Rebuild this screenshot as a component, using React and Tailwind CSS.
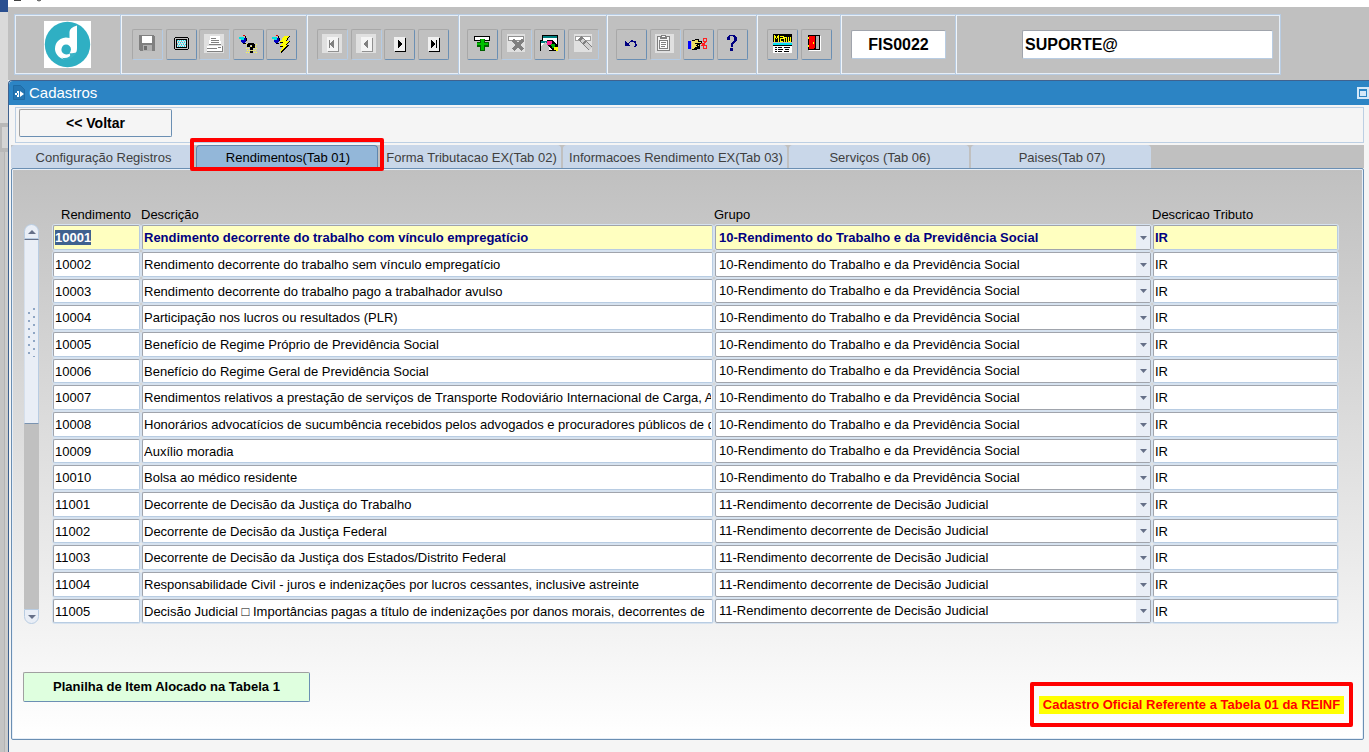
import React, { useEffect, useRef } from "react";

const rows = [
  ["10001", "Rendimento decorrente do trabalho com vínculo empregatício", 10],
  ["10002", "Rendimento decorrente do trabalho sem vínculo empregatício", 10],
  ["10003", "Rendimento decorrente do trabalho pago a trabalhador avulso", 10],
  ["10004", "Participação nos lucros ou resultados (PLR)", 10],
  ["10005", "Benefício de Regime Próprio de Previdência Social", 10],
  ["10006", "Benefício do Regime Geral de Previdência Social", 10],
  ["10007", "Rendimentos relativos a prestação de serviços de Transporte Rodoviário Internacional de Carga, Auferidos", 10],
  ["10008", "Honorários advocatícios de sucumbência recebidos pelos advogados e procuradores públicos de que", 10],
  ["10009", "Auxílio moradia", 10],
  ["10010", "Bolsa ao médico residente", 10],
  ["11001", "Decorrente de Decisão da Justiça do Trabalho", 11],
  ["11002", "Decorrente de Decisão da Justiça Federal", 11],
  ["11003", "Decorrente de Decisão da Justiça dos Estados/Distrito Federal", 11],
  ["11004", "Responsabilidade Civil - juros e indenizações por lucros cessantes, inclusive astreinte", 11],
  ["11005", "Decisão Judicial □ Importâncias pagas a título de indenizações por danos morais, decorrentes de", 11],
];

const groups = {
  10: "10-Rendimento do Trabalho e da Previdência Social",
  11: "11-Rendimento decorrente de Decisão Judicial",
};

const NavBox = ({ d, off }) => (
  <>
    {off && <path fill="#e0e0e0" d="M5 5h20v19H5z" />}
    <path fill={off ? "#909090" : "#000"} d="M11 9h11v14H11z" />
    <path fill={off ? "#f4f4f4" : "#f0f0f0"} d="M10 8h11v14H10z" />
    <path fill={off ? "#808080" : "#000"} d={d} />
  </>
);

const Flash = () => (
  <>
    <path fill="#00e0e0" d="M6 8h5v1h1v2h-4v-1H6z" />
    <path fill="#0000c0" d="M8 11h3V9h2v4h-1v1H9v-1H8z" />
    <path fill="#000" d="M12 7h1v2h1v3h-1V9h-1zM10 14h3v1h-3z" />
    <path fill="#e00000" d="M10 6h2v1h-2z" />
  </>
);

const icons = {
  save: (
    <>
      <path fill="#808080" d="M7 6h15v1h1v15H8v-1H7z" />
      <path fill="#fff" d="M10 7h10v7H10z" />
      <path fill="#b0b0b0" d="M11 16h9v6h-9z" />
      <path fill="#707070" d="M12 17h3v4h-3z" />
    </>
  ),
  screen: (
    <>
      <path fill="#000" d="M9 8h13v1h1v11h-1v1H9v-1H8V9h1z" />
      <path fill="#c0c0c0" d="M9 9h13v11H9z" />
      <path fill="#000" d="M10 10h11v9H10z" />
      <path fill="#b8f4f4" d="M11 11h9v7h-9z" />
      <path stroke="#f090a0" strokeDasharray="1 2" d="M12 12.500h8M11 14.500h9M12 16.500h8" />
      <path stroke="#20d0e0" strokeDasharray="1 1" d="M11 11.500h9M12 13.500h8M11 15.500h9M12 17.500h8" />
    </>
  ),
  print: (
    <>
      <path fill="#e0e0e0" d="M5 5h20v19H5z" />
      <path fill="#fff" d="M11 7h10l1 9H10z" />
      <path fill="#808080" d="M12 9h5v1h-5zM12 11h8v1h-8zM12 13h8v1h-8zM10 15h12v1H10z" />
      <path fill="#fff" d="M8 17h15v5H8z" />
      <path fill="#808080" d="M8 19h10v1H8zM19 18h3v1h-3zM8 22h16v1H8zM23 17h1v5h-1z" />
    </>
  ),
  ask: (
    <>
      <Flash />
      <path stroke="#ffff40" strokeDasharray="1 1" d="M13 15.500h11M14 17.500h10M13 19.500h11M14 21.500h10M13 23.500h11" />
      <path fill="#000" d="M15 14h6v1h1v4h-2v2h-3v-3h2v-2h-2v2h-3v-3h1zM17 22h3v2h-3z" />
    </>
  ),
  bolt: (
    <>
      <Flash />
      <path fill="#000" d="M18 7h6l-3 5h3l-3 4h2l-8 8 2-6h-3l3-4h-3z" />
      <path fill="#ffff00" d="M18 7h5l-3 5h3l-3 4h1l-7 7 3-6h-3l3-4h-3z" />
    </>
  ),
  first: <NavBox off d="M12 11h1v8h-1zM17 11v8h-1v-1h-1v-1h-1v-1h-1v-2h1v-1h1v-1h1v-1z" />,
  prev: <NavBox off d="M17 11v8h-1v-1h-1v-1h-1v-1h-1v-2h1v-1h1v-1h1v-1z" />,
  next: <NavBox d="M14 11v8h1v-1h1v-1h1v-1h1v-2h-1v-1h-1v-1h-1v-1z" />,
  last: <NavBox d="M13 11v8h1v-1h1v-1h1v-1h1v-2h-1v-1h-1v-1h-1v-1zM18 11h1v8h-1z" />,
  add: (
    <>
      <path fill="#000" d="M7 7h16v5H7z" />
      <path fill="#fff" d="M8 8h14v3H8z" />
      <path fill="#006000" d="M13 10h5v3h4v5h-4v4h-5v-4h-3v-5h3z" />
      <path fill="#00c000" d="M14 10h3v4h4v2h-4v5h-3v-5h-4v-2h4z" />
    </>
  ),
  remove: (
    <>
      <path fill="#e0e0e0" d="M6 5h18v18H6z" />
      <path fill="#909090" d="M7 7h16v5H7z" />
      <path fill="#fff" d="M8 8h14v3H8z" />
      <path stroke="#808080" strokeWidth="3" d="M12 11l10 10M22 11L12 21" />
    </>
  ),
  search: (
    <>
      <path fill="#000" d="M8 6h16v12H8zM6 11h16v11H6z" />
      <path fill="#fff" d="M9 9h14v8H9zM7 14h13v7H7z" />
      <path fill="#008080" d="M9 7h14v2H9zM7 12h13v2H7z" />
      <path fill="#c0c0c0" d="M7 17l4-4 4 4v5H7z" />
      <path fill="#000" d="M13 11h5l6 6v5h-5l-6-6z" />
      <path fill="#ff2090" d="M13 12h5v4h-5z" />
      <path fill="#00b000" d="M17 15h4v4h-3v-2h-1z" />
      <path fill="#ffff00" d="M20 18h4v4h-2v-1h-2z" />
    </>
  ),
  erase: (
    <>
      <path fill="#e0e0e0" d="M6 5h18v18H6z" />
      <path fill="#a0a0a0" d="M7 7h16v5H7z" />
      <path fill="#fff" d="M8 8h14v3H8z" />
      <path stroke="#808080" strokeWidth="5" d="M12 9l11 11" />
      <path stroke="#d0d0d0" strokeWidth="3" d="M14 11l9 9" />
      <path stroke="#808080" strokeWidth="2" d="M15 15l3-3" />
    </>
  ),
  undo: (
    <>
      <path fill="none" stroke="#000080" strokeWidth="1.4" d="M11 16l3-3q2-2 5 0 2 3 0 5" />
      <path fill="#000080" d="M9 12h1v1h1v1h1v1h1v1h1v1H9z" />
    </>
  ),
  paste: (
    <>
      <path fill="#e0e0e0" d="M5 5h19v19H5z" />
      <path fill="#808080" d="M7 7h13v15H7z" />
      <path fill="#f4f4f4" d="M8 8h11v13H8z" />
      <path fill="#808080" d="M11 6h5v1h1v3h-7V7h1zM9 11h9v9H9z" />
      <path fill="#fff" d="M12 7h3v1h-3zM10 12h7v7h-7z" />
      <path fill="#808080" d="M11 13h5v1h-5zM11 15h5v1h-5zM11 17h4v1h-4z" />
    </>
  ),
  hand: (
    <>
      <path fill="#0000ff" d="M5 12h3v8H5z" />
      <path fill="#000" d="M9 11h3v-1h4v2h3v3h-2v5h-3v1H9z" />
      <path fill="#f0e060" d="M9 12h3v-1h3v2h3v1h-4v2h2v1h-2v2h-3v1H9z" />
      <path fill="#000" d="M12 14h2v1h-2zM13 16h2v1h-2zM12 18h2v1h-2z" />
      <path fill="none" stroke="#ff2020" d="M17.500 14h2l3 3M17.500 16h2l3-3M20 9.500h3v3h-3zM20 16.500h3v3h-3z" />
    </>
  ),
  help: (
    <path fill="#000080" d="M12 6h6v1h1v1h1v4h-1v1h-1v1h-1v1h-1v3h-2v-4h1v-1h1v-1h1V8h-1V7h-3v4h-3V8h1V7h1zM13 19h3v3h-3z" />
  ),
  menu: (
    <>
      <path fill="#000" d="M6 5h19v8H6z" />
      <path fill="none" stroke="#ffff00" d="M7.500 13V6.500M7.500 6.500l2 3 2-3M11.500 6V13M13 9.500h3M13.500 9v3.500H16M13 7.500h3V10M17.500 13V8.500h2V13M21.500 8v4.500h2V8" />
      <path fill="#00e0f0" d="M6 14h19v3H6z" />
      <path fill="#fff" d="M6 17h19v7H6z" />
      <path fill="#000" d="M6 16h19v1H6zM8 18h2v1H8zM11 18h4v1h-4zM17 18h6v1h-6zM8 20h2v1H8zM11 20h5v1h-5zM18 20h4v1h-4zM8 22h2v1H8zM11 22h4v1h-4zM17 22h5v1h-5z" />
    </>
  ),
  exit: (
    <>
      <path fill="#fff" d="M8 7h12v15H8z" />
      <path fill="#000" d="M7 6h12v15H7z" />
      <path fill="#b0b0b0" d="M15 7h3v13h-3z" />
      <path fill="#ff0000" d="M8 7h6v12h-1v1H8z" />
      <path fill="#ffff00" d="M7 8h1v2H7zM7 16h1v2H7zM12 13h1v2h-1z" />
    </>
  ),
};

const ToolGroup = ({ items, className }) => (
  <div className={`flex items-center justify-between ${className}`}>
    {items.map(([name, label, disabled]) => (
      <button
        key={name}
        aria-label={label}
        disabled={disabled}
        className={`size-[31px] rounded-xs border border-t-[#a8a8a8] border-l-[#a8a8a8] ${
          disabled ? "border-r-[#b4cbe4] border-b-[#b4cbe4]" : "border-r-[#6b8fb3] border-b-[#6b8fb3]"
        }`}
      >
        <svg viewBox="1 1 29 29" className="block size-[29px]" shapeRendering="crispEdges" aria-hidden="true">
          {icons[name]}
        </svg>
      </button>
    ))}
  </div>
);

const Divider = () => <div className="w-[2px] self-stretch border-l border-[#b8cce2] bg-[#f0f5fa]" />;

const Toolbar = () => (
  <header className="flex bg-[#c0c0c0] px-[6px] pt-[7px] pb-[5px]">
    <div className="flex h-[61px] w-[1267px] items-center border border-[#b8cce2] ring-1 ring-[#e6eef7] ring-inset">
      <div className="flex w-[105px] justify-center">
        <svg viewBox="0 0 47 47" className="size-[47px] bg-white" role="img" aria-label="Logo">
          <circle cx="23.500" cy="23.500" r="22.700" fill="#2fafc3" />
          <path fill="#fff" d="M33 4.500v22.500a11 11 0 1 1-7.500-10V11q0-4.500 7.500-6.500z" />
          <path fill="#2fafc3" d="M22 23.500a5 5 0 0 1 5 5q-.3 2.500-2 4.500-3 1-5.500-.5a5 5 0 0 1 2.500-9z" />
          <path fill="#2fafc3" d="M25 32q2 2 .5 3.500-4 2.500-8 1 3 4 9 2.500 6-2 8-9-4 3-9.500 2z" opacity="0.950" />
        </svg>
      </div>
      <Divider />
      <ToolGroup
        className="mr-[9px] ml-[10px] w-[165px]"
        items={[["save", "Salvar", true], ["screen", "Tela"], ["print", "Imprimir", true], ["ask", "Entrar consulta"], ["bolt", "Executar consulta"]]}
      />
      <Divider />
      <ToolGroup
        className="mx-[9px] w-[132px]"
        items={[["first", "Primeiro", true], ["prev", "Anterior", true], ["next", "Próximo"], ["last", "Último"]]}
      />
      <Divider />
      <ToolGroup
        className="mx-[7px] w-[132px]"
        items={[["add", "Inserir"], ["remove", "Remover", true], ["search", "Pesquisar"], ["erase", "Limpar", true]]}
      />
      <Divider />
      <ToolGroup
        className="mx-[8px] w-[132px]"
        items={[["undo", "Desfazer"], ["paste", "Colar", true], ["hand", "Recortar"], ["help", "Ajuda"]]}
      />
      <Divider />
      <ToolGroup className="mr-[8px] ml-[9px] w-[65px]" items={[["menu", "Menu"], ["exit", "Sair"]]} />
      <Divider />
      <input
        aria-label="Programa"
        defaultValue="FIS0022"
        className="mx-[9px] h-[29px] w-[95px] rounded-xs border border-t-[#a0a4ac] border-r-[#b8cce2] border-b-[#b8cce2] border-l-[#a0a4ac] bg-white text-center text-[16px] font-bold outline-none"
      />
      <Divider />
      <input
        aria-label="Usuário"
        defaultValue="SUPORTE@"
        className="ml-auto mr-[7px] h-[29px] w-[251px] rounded-xs border border-t-[#a0a4ac] border-r-[#b8cce2] border-b-[#b8cce2] border-l-[#a0a4ac] bg-white pl-[2px] text-[16px] font-bold outline-none"
      />
    </div>
  </header>
);

const tabs = [
  ["Configuração Registros", "w-[183px]"],
  ["Rendimentos(Tab 01)", "w-[182px]"],
  ["Forma Tributacao EX(Tab 02)", "w-[181px]"],
  ["Informacoes Rendimento EX(Tab 03)", "w-[224px]"],
  ["Serviços (Tab 06)", "w-[180px]"],
  ["Paises(Tab 07)", "w-[180px]"],
];

const Tabs = () => (
  <div role="tablist" className="flex h-[23px] gap-[2px] bg-[#c0c0c0]">
    {tabs.map(([label, width], i) => (
      <div key={label} className={`relative ${width}`}>
        <button
          role="tab"
          aria-selected={i === 1}
          className={`h-full w-full rounded-t-sm border border-b-0 pt-[2px] pl-[2px] text-[13px] leading-5 whitespace-nowrap ${
            i === 1 ? "border-[#5f86ad] bg-[#93b7d9] text-black" : "border-[#c9d7e9] bg-[#c9d7e9] text-[#404040]"
          }`}
        >
          {label}
        </button>
        {i === 1 && <div className="pointer-events-none absolute -inset-x-[6px] -top-[7px] -bottom-[3px] z-10 rounded-xs border-4 border-[#ff0000]" />}
      </div>
    ))}
  </div>
);

const ScrollBar = () => (
  <div className="mt-[18px] flex w-[15px] shrink-0 flex-col" aria-hidden="true">
    <div className="flex h-[15px] items-center justify-center rounded-t-full border border-[#b8cce2] bg-[#e9eef6]">
      <svg viewBox="0 0 8 4" className="h-[4px] w-[8px]"><path fill="#667088" d="M4 0l4 4H0z" /></svg>
    </div>
    <div className="flex h-[185px] flex-col items-center justify-center border border-t-[#667088] border-r-[#b8cce2] border-b-[#7a93b0] border-l-[#d5dfec] bg-[#e9eef6]">
      <svg viewBox="0 0 9 50" className="h-[50px] w-[9px]">
        <path stroke="#8fa6c4" strokeWidth="2" strokeDasharray="2 6" d="M2 5v45M7 1v49" />
      </svg>
    </div>
    <div className="flex-1 bg-[#c0c0c0]" />
    <div className="flex h-[15px] items-center justify-center rounded-b-full border border-[#b8cce2] bg-[#e9eef6]">
      <svg viewBox="0 0 8 4" className="h-[4px] w-[8px]"><path fill="#667088" d="M0 0h8L4 4z" /></svg>
    </div>
  </div>
);

const field =
  "block h-full w-full rounded-xs border border-t-[#a0a4ac] border-l-[#a0a4ac] px-[1px] ring-1 ring-[#d6e2ef] outline-none";
const light = "border-r-[#b8cce2] border-b-[#b8cce2]";

const DataTable = () => {
  const first = useRef(null);
  useEffect(() => {
    first.current.focus();
    first.current.select();
  }, []);
  return (
    <table className="w-full table-fixed border-collapse text-[13px] leading-[18px]">
      <colgroup>
        <col className="w-[89px]" />
        <col />
        <col className="w-[438px]" />
        <col className="w-[187px]" />
      </colgroup>
      <thead>
        <tr className="h-[18px] text-left">
          <th className="p-0 pl-[9px] font-normal">Rendimento</th>
          <th className="p-0 font-normal">Descrição</th>
          <th className="p-0 font-normal">Grupo</th>
          <th className="p-0 font-normal">Descricao Tributo</th>
        </tr>
      </thead>
      <tbody>
        {rows.map(([code, text, group], i) => {
          const tone = i === 0 ? "bg-[#ffffc0] font-bold text-[#000080]" : "bg-white";
          return (
            <tr key={code} className="h-[27px] nth-[3n]:h-[26px] [&>td]:h-[inherit]">
              <td className="p-px">
                <input
                  ref={i === 0 ? first : undefined}
                  aria-label={`Rendimento ${code}`}
                  defaultValue={code}
                  className={`${field} ${light} ${tone} selection:bg-[#3f618f] selection:text-white`}
                />
              </td>
              <td className="p-px">
                <input aria-label={`Descrição ${code}`} defaultValue={text} className={`${field} ${light} ${tone}`} />
              </td>
              <td className="p-px">
                <div className="relative h-full">
                  <select
                    aria-label={`Grupo ${code}`}
                    defaultValue={group}
                    className={`${field} ${tone} appearance-none border-r-[#a0a4ac] border-b-[#a0a4ac] pl-[3px]`}
                  >
                    <option value={10}>{groups[10]}</option>
                    <option value={11}>{groups[11]}</option>
                  </select>
                  <span className="pointer-events-none absolute inset-y-px right-px flex w-[14px] items-center justify-center bg-[#e9eef6]">
                    <svg viewBox="0 0 7 4" className="h-[4px] w-[7px]" aria-hidden="true"><path fill="#667088" d="M0 0h7L3.500 4z" /></svg>
                  </span>
                </div>
              </td>
              <td className="p-px">
                <input aria-label={`Descricao Tributo ${code}`} defaultValue="IR" className={`${field} ${light} ${tone}`} />
              </td>
            </tr>
          );
        })}
      </tbody>
    </table>
  );
};

export default function App() {
  return (
    <div className="flex min-h-screen overflow-hidden bg-[#f5f5f5] font-['Liberation_Sans',Arial,sans-serif] text-black">
      <div className="flex w-[8px] shrink-0 flex-col bg-[#c4c4c4]">
        <div className="h-[12px] bg-[#2a4f90]" />
        <div className="h-[111px] bg-[#dadada]" />
        <div className="h-[29px] border-y-4 border-l-2 border-[#b8b8b8] bg-[#d4d4d4]" />
        <div className="ml-[4px] flex-1 border-l border-[#b4b4b4] bg-[#cccccc]" />
      </div>
      <div className="flex min-w-0 flex-1 flex-col">
        <div className="h-[7px] bg-white">
          <svg viewBox="0 0 50 7" className="block h-[7px] w-[50px]" aria-hidden="true">
            <path fill="#404040" d="M6 0h7v1H6z" />
            <path fill="none" stroke="#404040" d="M29 0q2 2 4 0" />
          </svg>
        </div>
        <Toolbar />
        <div className="flex-1 rounded-tl-sm border-t border-l border-[#3f628f] bg-[#f5f5f5]">
          <div className="flex h-[24px] items-center rounded-tl-sm bg-[#2c84c4] pl-[4px] text-white">
            <svg viewBox="0 0 12 15" className="mb-[2px] h-[15px] w-[12px]" aria-hidden="true">
              <path fill="#2576b3" stroke="#1f6ba5" d="M.5.500h7l4 4v10H.5z" />
              <path fill="#fff" d="M2 8h2V6h2v6H4v-2H2zM7 6l4 3-4 3z" />
              <path fill="#2c84c4" d="M4 8h1v2H4z" />
            </svg>
            <h1 className="ml-[4px] text-[15px] leading-5">Cadastros</h1>
            <button aria-label="Restaurar" className="ml-auto h-[12px] w-[12px] border-2 border-[#d5e8f8] bg-[#d5e8f8]">
              <span className="block h-[8px] w-[8px] border border-t-2 border-[#2c84c4]" />
            </button>
          </div>
          <div className="mt-[2px] mr-[5px] ml-[6px] h-[36px] border border-[#bccfe3] pt-[1px] pl-[3px]">
            <button className="h-[28px] w-[153px] rounded-xs border border-t-[#a0a0a0] border-r-[#6b8fb3] border-b-[#6b8fb3] border-l-[#a0a0a0] text-[14px] font-bold">
              &lt;&lt; Voltar
            </button>
          </div>
          <main className="mt-[2px] mr-[5px] ml-[2px]">
            <Tabs />
            <section className="rounded-xs border border-[#6b8fb3] bg-linear-to-b from-[#c0c0c0] to-white ring-1 ring-[#e6eef7] ring-inset">
              <div className="flex gap-[13px] pt-[37px] pr-[24px] pl-[12px]">
                <ScrollBar />
                <div className="min-w-0 flex-1">
                  <DataTable />
                </div>
              </div>
              <div className="flex items-start justify-between pt-[48px] pr-[10px] pb-[12px] pl-[11px]">
                <button className="h-[30px] w-[287px] rounded-xs border border-t-[#a0a0a0] border-r-[#6b8fb3] border-b-[#6b8fb3] border-l-[#a0a0a0] bg-[#dfffdf] text-[13px] font-bold">
                  Planilha de Item Alocado na Tabela 1
                </button>
                <div className="mt-[10px] flex h-[45px] w-[323px] items-center justify-center rounded-xs border-4 border-[#ff0000]">
                  <strong className="bg-[#ffff00] px-[4px] text-[13px] leading-[18px] whitespace-nowrap text-[#ff0000]">
                    Cadastro Oficial Referente a Tabela 01 da REINF
                  </strong>
                </div>
              </div>
            </section>
          </main>
        </div>
      </div>
    </div>
  );
}
